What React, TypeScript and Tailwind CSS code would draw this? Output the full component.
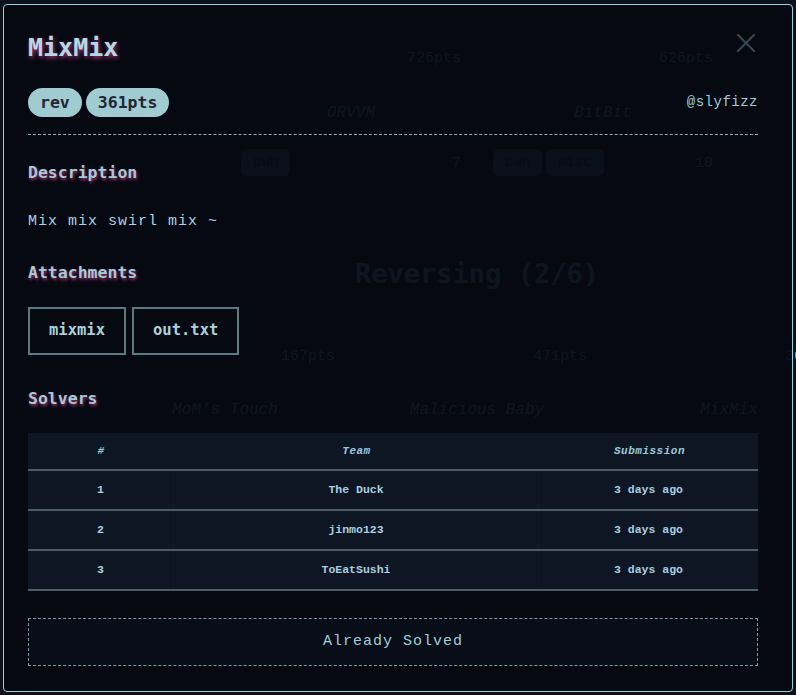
import React from "react";

const mono = { fontFamily: '"DejaVu Sans Mono", "Liberation Mono", monospace' };
const lmono = { fontFamily: '"Liberation Mono", "DejaVu Sans Mono", monospace' };

function GhostCard({ pts, title, tags, solves }: { pts: string; title: string; tags: string[]; solves: string }) {
  return (
    <div className="flex h-[160px] w-[252px] shrink-0 flex-col px-4 pt-[18px]" style={lmono}>
      <div className="flex justify-end text-[15px] text-[#8cb8d0]">{pts}</div>
      <div className="mt-[30px] text-center text-[16px] italic text-[#8cb8d0]">{title}</div>
      {tags.length > 0 && (
        <div className="mt-[24px] flex items-center justify-between">
          <div className="flex gap-1">
            {tags.map((t) => (
              <span key={t} className="rounded-md bg-[#4a6d7a] px-3 py-[3px] text-[14px] text-[#102030]">
                {t}
              </span>
            ))}
          </div>
          <span className="pt-[4px] text-[15px] text-[#8cb8d0]">{solves}</span>
        </div>
      )}
    </div>
  );
}

function Heading({ children, className = "" }: { children: React.ReactNode; className?: string }) {
  return (
    <div
      className={"text-[16.5px] font-bold leading-[24px] text-[#a9c8d6] [text-shadow:1px_2px_3px_rgba(196,60,130,0.75)] " + className}
      style={mono}
    >
      {children}
    </div>
  );
}

export default function App() {
  const solvers = [
    { n: "1", team: "The Duck", sub: "3 days ago" },
    { n: "2", team: "jinmo123", sub: "3 days ago" },
    { n: "3", team: "ToEatSushi", sub: "3 days ago" },
  ];
  return (
    <div className="relative h-[695px] w-[796px] overflow-hidden bg-[#0e121a]">
      {/* ghost page behind modal */}
      <div className="flex w-[954px] flex-col items-center">
        <div className="mt-[30px] flex justify-center">
          <GhostCard pts="726pts" title="ORVVM" tags={["pwn"]} solves="7" />
          <GhostCard pts="626pts" title="BitBit" tags={["pwn", "misc"]} solves="10" />
        </div>
        <div className="mt-[64px] text-[27px] font-bold text-[#8cb8d0]" style={mono}>
          Reversing (2/6)
        </div>
        <div className="mt-[33px] flex w-[954px] justify-center">
          <GhostCard pts="167pts" title="MoM's Touch" tags={[]} solves="" />
          <GhostCard pts="471pts" title="Malicious Baby" tags={[]} solves="" />
          <GhostCard pts="361pts" title="MixMix" tags={[]} solves="" />
        </div>
      </div>

      {/* modal */}
      <div className="absolute left-[3px] top-[4px] flex h-[688px] w-[790px] flex-col rounded-[4px] border border-[#9ccfd8] bg-[#050911]/[0.93] pl-[24px] pr-[34px] pt-[27px]">
        <div className="flex items-start justify-between">
          <div
            className="text-[25px] font-bold leading-[32px] text-[#b5d9e2] [text-shadow:1px_2px_4px_rgba(200,60,140,0.8)]"
            style={mono}
          >
            MixMix
          </div>
          <svg width="20" height="20" viewBox="0 0 20 20" className="mr-[2px] mt-[1px]">
            <path d="M2 2 L18 18 M18 2 L2 18" stroke="#3b4752" strokeWidth="2" strokeLinecap="square" />
          </svg>
        </div>

        <div className="mt-[24px] flex items-center justify-between border-b border-dashed border-[#8fb0b8] pb-[17px]">
          <div className="flex gap-[4px]">
            {["rev", "361pts"].map((b) => (
              <span
                key={b}
                className="rounded-full bg-[#9fcbd1] px-[12px] text-[16.5px] font-bold leading-[29px] text-[#1f2636]"
                style={mono}
              >
                {b}
              </span>
            ))}
          </div>
          <span className="text-[14px] tracking-[0.5px] text-[#9ccfd8]" style={lmono}>
            @slyfizz
          </span>
        </div>

        <Heading className="mt-[26px]">Description</Heading>
        <div className="mt-[26px] text-[15px] leading-[22px] tracking-[1px] text-[#a9d3e2]" style={lmono}>
          Mix mix swirl mix ~
        </div>

        <Heading className="mt-[28px]">Attachments</Heading>
        <div className="mt-[22px] flex gap-[6px]">
          {["mixmix", "out.txt"].map((a) => (
            <div
              key={a}
              className="flex h-[48px] items-center border-2 border-[#5b7a7e] px-[19px] text-[15.5px] font-bold text-[#a9d3dc]"
              style={mono}
            >
              {a}
            </div>
          ))}
        </div>

        <Heading className="mt-[32px]">Solvers</Heading>
        <div className="mt-[22px] bg-[#0f1623]" style={lmono}>
          <div className="grid h-[38px] grid-cols-[146px_365px_1fr] items-center border-b-2 border-[#4b5e64] text-[11px] font-bold italic tracking-[0.5px] text-[#9cc9dc]">
            <div className="text-center">#</div>
            <div className="text-center">Team</div>
            <div className="pl-[75px] text-left">Submission</div>
          </div>
          {solvers.map((s) => (
            <div
              key={s.n}
              className="grid h-[40px] grid-cols-[146px_365px_1fr] items-center border-b-2 border-[#4b5e64] text-[11.5px] font-bold text-[#a9cfe0]"
            >
              <div className="border-r border-[#121a27] text-center leading-[38px]">{s.n}</div>
              <div className="border-r border-[#121a27] text-center leading-[38px]">{s.team}</div>
              <div className="pl-[75px] leading-[38px]">{s.sub}</div>
            </div>
          ))}
        </div>

        <div
          className="mt-[27px] flex h-[48px] items-center justify-center border border-dashed border-[#7a9ca2] bg-[#080d18] text-[15px] tracking-[1px] text-[#9ccfd8]"
          style={lmono}
        >
          Already Solved
        </div>
      </div>
    </div>
  );
}
